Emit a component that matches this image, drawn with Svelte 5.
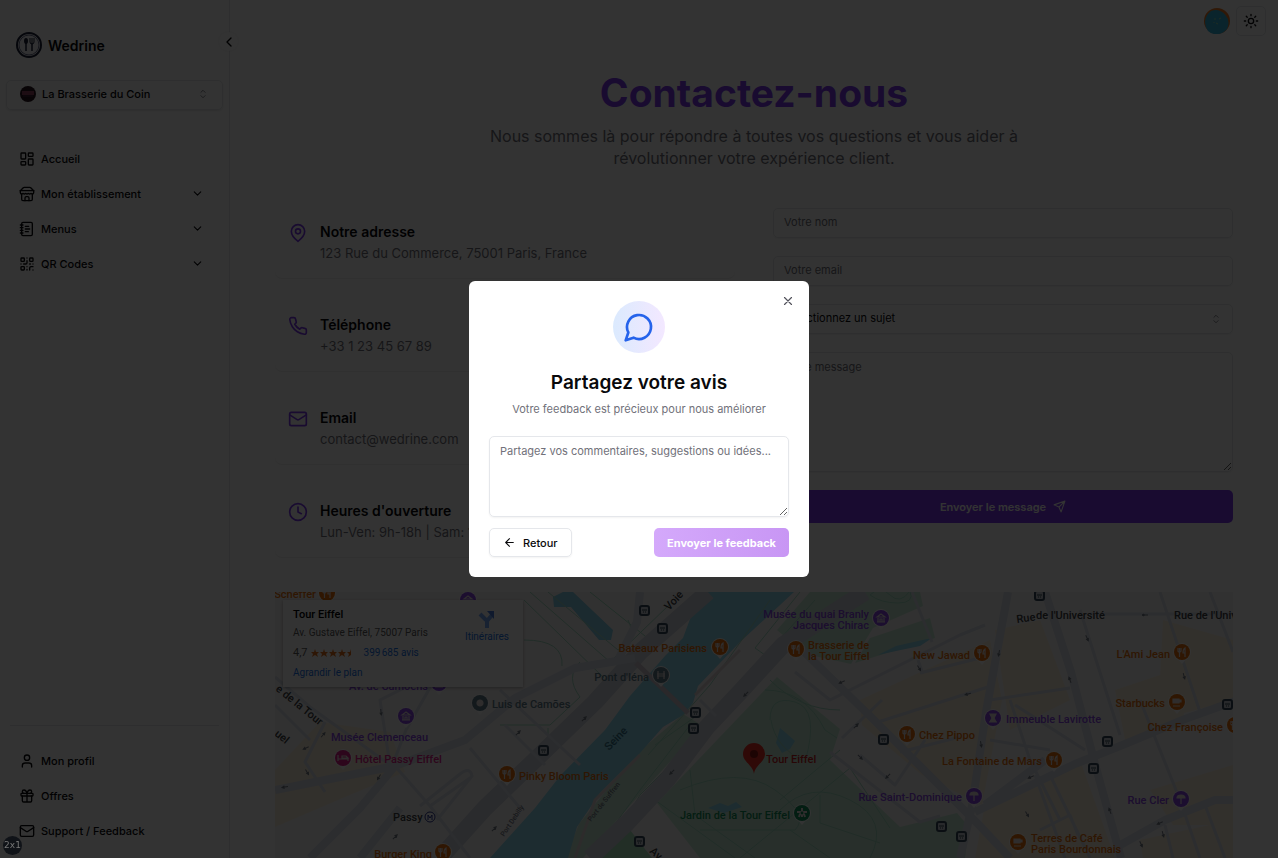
<script lang="ts">
  let feedback = $state("");
  let dialogOpen = $state(true);

  const mainLinks = [
    { label: "Accueil", icon: "dashboard", nested: false },
    { label: "Mon établissement", icon: "store", nested: true },
    { label: "Menus", icon: "notebook", nested: true },
    { label: "QR Codes", icon: "qr", nested: true },
  ];

  const footerLinks = [
    { label: "Mon profil", icon: "user" },
    { label: "Offres", icon: "gift" },
    { label: "Support / Feedback", icon: "mail" },
  ];

  const contacts = [
    { title: "Notre adresse", text: "123 Rue du Commerce, 75001 Paris, France", icon: "pin" },
    { title: "Téléphone", text: "+33 1 23 45 67 89", icon: "phone" },
    { title: "Email", text: "contact@wedrine.com", icon: "mail" },
    { title: "Heures d'ouverture", text: "Lun-Ven: 9h-18h | Sam: 10h-16h", icon: "clock" },
  ];

  const ORANGE = "#e8710a";
  const PURPLE = "#8b46e8";
  const PINK = "#e0218a";
  const SLATE = "#607d8b";
  const GREEN = "#12915a";

  // x/y is the centre of the pin, tx/ty the baseline of the first line
  const places = [
    { x: 327, y: 593, tx: 316, ty: 598, end: true, lines: ["Scheffer"], color: ORANGE, kind: "fork" },
    { x: 468, y: 600, tx: 430, ty: 604, end: true, lines: [], color: PURPLE, kind: "museum" },
    { x: 439, y: 683, tx: 428, ty: 690, end: true, lines: ["Av. de Camoëns"], color: PURPLE, kind: "museum" },
    { x: 406, y: 716, tx: 331, ty: 741, end: false, lines: ["Musée Clemenceau"], color: PURPLE, kind: "museum" },
    { x: 343, y: 758, tx: 355, ty: 763, end: false, lines: ["Hôtel Passy Eiffel"], color: PINK, kind: "bed" },
    { x: 480, y: 703, tx: 492, ty: 708, end: false, lines: ["Luis de Camões"], color: SLATE, kind: "dot" },
    { x: 507, y: 774, tx: 519, ty: 780, end: false, lines: ["Pinky Bloom Paris"], color: ORANGE, kind: "fork" },
    { x: 443, y: 852, tx: 432, ty: 858, end: true, lines: ["Burger King"], color: ORANGE, kind: "fork" },
    { x: 720, y: 647, tx: 707, ty: 652, end: true, lines: ["Bateaux Parisiens"], color: ORANGE, kind: "fork" },
    { x: 661, y: 675, tx: 649, ty: 681, end: true, lines: ["Pont d'Iéna"], color: SLATE, kind: "bridge" },
    { x: 796, y: 649, tx: 808, ty: 649, end: false, lines: ["Brasserie de", "la Tour Eiffel"], color: ORANGE, kind: "fork" },
    { x: 881, y: 618, tx: 869, ty: 618, end: true, lines: ["Musée du quai Branly", "Jacques Chirac"], color: PURPLE, kind: "museum" },
    { x: 982, y: 653, tx: 970, ty: 659, end: true, lines: ["New Jawad"], color: ORANGE, kind: "fork" },
    { x: 907, y: 734, tx: 919, ty: 739, end: false, lines: ["Chez Pippo"], color: ORANGE, kind: "fork" },
    { x: 993, y: 718, tx: 1006, ty: 723, end: false, lines: ["Immeuble Lavirotte"], color: PURPLE, kind: "tower" },
    { x: 1054, y: 760, tx: 1042, ty: 765, end: true, lines: ["La Fontaine de Mars"], color: ORANGE, kind: "fork" },
    { x: 974, y: 796, tx: 962, ty: 801, end: true, lines: ["Rue Saint-Dominique"], color: PURPLE, kind: "sign" },
    { x: 802, y: 813, tx: 790, ty: 819, end: true, lines: ["Jardin de la Tour Eiffel"], color: GREEN, kind: "flower" },
    { x: 1182, y: 652, tx: 1170, ty: 658, end: true, lines: ["L'Ami Jean"], color: ORANGE, kind: "fork" },
    { x: 1177, y: 702, tx: 1165, ty: 707, end: true, lines: ["Starbucks"], color: ORANGE, kind: "cup" },
    { x: 1235, y: 725, tx: 1223, ty: 731, end: true, lines: ["Chez Françoise"], color: ORANGE, kind: "fork" },
    { x: 1181, y: 799, tx: 1169, ty: 804, end: true, lines: ["Rue Cler"], color: PURPLE, kind: "sign" },
    { x: 1018, y: 842, tx: 1031, ty: 842, end: false, lines: ["Terres de Café", "Paris Bourdonnais"], color: ORANGE, kind: "cup" },
  ];

  const stops = [
    [644, 610], [662, 628], [543, 750], [695, 712], [693, 728], [639, 841], [883, 739], [941, 826],
    [961, 836], [1039, 595], [1107, 741], [1093, 768], [1227, 704],
  ];

  const arrows = [
    [584, 719, -45], [518, 733, -45], [518, 676, -45], [672, 772, 135], [746, 694, 135], [842, 682, 155],
    [856, 726, -45], [860, 757, 45], [888, 776, 135], [968, 694, 165], [919, 668, 60], [999, 653, 100],
    [1087, 638, 65], [1070, 680, 250], [1145, 615, 180], [1184, 676, 75], [1031, 777, 155],
    [1027, 814, 60], [1110, 811, 250], [1160, 823, 155], [1163, 834, 75], [381, 712, 85],
    [323, 735, -50], [306, 748, 155], [307, 772, 60], [379, 777, 120], [285, 787, 170], [395, 837, -45],
    [494, 829, -45], [981, 744, 80], [1141, 844, 65],
  ];
</script>

{#snippet icon(name: string, size: number)}
  <svg
    width={size}
    height={size}
    viewBox="0 0 24 24"
    fill="none"
    stroke="currentColor"
    stroke-width="2"
    stroke-linecap="round"
    stroke-linejoin="round"
    aria-hidden="true"
  >
    {#if name === "dashboard"}
      <rect x="3" y="3" width="7" height="9" rx="1" />
      <rect x="14" y="3" width="7" height="5" rx="1" />
      <rect x="14" y="12" width="7" height="9" rx="1" />
      <rect x="3" y="16" width="7" height="5" rx="1" />
    {:else if name === "store"}
      <path d="m2 7 4.4-4.4A2 2 0 0 1 7.8 2h8.4a2 2 0 0 1 1.4.6L22 7" />
      <path d="M4 12v8a2 2 0 0 0 2 2h12a2 2 0 0 0 2-2v-8" />
      <path d="M15 22v-4a2 2 0 0 0-2-2h-2a2 2 0 0 0-2 2v4M2 7h20" />
      <path
        d="M22 7v3a2 2 0 0 1-2 2 2.7 2.7 0 0 1-1.6-.6.7.7 0 0 0-.8 0A2.7 2.7 0 0 1 16 12a2.7 2.7 0 0 1-1.6-.6.7.7 0 0 0-.8 0A2.7 2.7 0 0 1 12 12a2.7 2.7 0 0 1-1.6-.6.7.7 0 0 0-.8 0A2.7 2.7 0 0 1 8 12a2.7 2.7 0 0 1-1.6-.6.7.7 0 0 0-.8 0A2.7 2.7 0 0 1 4 12a2 2 0 0 1-2-2V7"
      />
    {:else if name === "notebook"}
      <path d="M2 6h4M2 10h4M2 14h4M2 18h4" />
      <rect x="4" y="2" width="16" height="20" rx="2" />
      <path d="M9.500 8h5M9.500 12H16M9.500 16H14" />
    {:else if name === "qr"}
      <rect x="3" y="3" width="5" height="5" rx="1" />
      <rect x="16" y="3" width="5" height="5" rx="1" />
      <rect x="3" y="16" width="5" height="5" rx="1" />
      <path d="M21 16h-3a2 2 0 0 0-2 2v3M21 21v.01M12 7v3a2 2 0 0 1-2 2H7M3 12h.01M12 3h.01M12 16v.01M16 12h1M21 12v.01M12 21v-1" />
    {:else if name === "user"}
      <circle cx="12" cy="7" r="4" />
      <path d="M19 21v-2a4 4 0 0 0-4-4H9a4 4 0 0 0-4 4v2" />
    {:else if name === "gift"}
      <rect x="3" y="8" width="18" height="4" rx="1" />
      <path d="M12 8v13M19 12v7a2 2 0 0 1-2 2H7a2 2 0 0 1-2-2v-7" />
      <path d="M7.500 8a2.500 2.500 0 0 1 0-5A4.800 8 0 0 1 12 8a4.800 8 0 0 1 4.500-5 2.500 2.500 0 0 1 0 5" />
    {:else if name === "mail"}
      <rect x="2" y="4" width="20" height="16" rx="2" />
      <path d="m22 7-8.970 5.700a1.940 1.940 0 0 1-2.060 0L2 7" />
    {:else if name === "pin"}
      <path d="M20 10c0 6-8 12-8 12s-8-6-8-12a8 8 0 0 1 16 0Z" />
      <circle cx="12" cy="10" r="3" />
    {:else if name === "phone"}
      <path
        d="M22 16.920v3a2 2 0 0 1-2.180 2 19.790 19.790 0 0 1-8.630-3.070 19.500 19.500 0 0 1-6-6 19.790 19.790 0 0 1-3.070-8.670A2 2 0 0 1 4.110 2h3a2 2 0 0 1 2 1.720 12.840 12.840 0 0 0 .7 2.810 2 2 0 0 1-.45 2.110L8.090 9.910a16 16 0 0 0 6 6l1.270-1.270a2 2 0 0 1 2.110-.45 12.840 12.840 0 0 0 2.810.7A2 2 0 0 1 22 16.920z"
      />
    {:else if name === "clock"}
      <circle cx="12" cy="12" r="10" />
      <path d="M12 6v6l4 2" />
    {:else if name === "sun"}
      <circle cx="12" cy="12" r="4" />
      <path d="M12 2v2M12 20v2M4.930 4.930l1.410 1.410M17.660 17.660l1.410 1.410M2 12h2M20 12h2M6.340 17.660l-1.410 1.410M19.070 4.930l-1.410 1.410" />
    {:else if name === "send"}
      <path d="m22 2-7 20-4-9-9-4ZM22 2 11 13" />
    {:else if name === "message"}
      <path d="M7.900 20A9 9 0 1 0 4 16.100L2 22Z" />
    {:else if name === "down"}
      <path d="m6 9 6 6 6-6" />
    {:else if name === "left"}
      <path d="m15 18-6-6 6-6" />
    {:else if name === "arrow"}
      <path d="m12 19-7-7 7-7M19 12H5" />
    {:else if name === "close"}
      <path d="M18 6 6 18M6 6l12 12" />
    {:else if name === "sort"}
      <path d="m7 8 5-5 5 5M7 16l5 5 5-5" />
    {/if}
  </svg>
{/snippet}

<div class="app">
  <aside class="sidebar">
    <button class="collapse" aria-label="Réduire le menu">{@render icon("left", 16)}</button>
    <a class="brand" href="/">
      <svg width="28" height="28" viewBox="0 0 28 28" aria-hidden="true">
        <circle cx="14" cy="14" r="12" fill="#f4f4f8" stroke="#1b2138" stroke-width="2" />
        <circle cx="14" cy="14" r="10" fill="none" stroke="#6d7390" stroke-width="1" />
        <ellipse cx="11" cy="10" rx="2" ry="3" fill="#1b2138" />
        <path d="M11 12v8M17 12v8" stroke="#1b2138" stroke-width="1.500" />
        <path d="M15 7v4q0 2 2 2t2-2V7M17 7v5" fill="none" stroke="#1b2138" />
      </svg>
      Wedrine
    </a>
    <button class="venue">
      <svg width="16" height="16" viewBox="0 0 16 16" aria-hidden="true">
        <circle cx="8" cy="8" r="8" fill="#2a1420" />
        <path d="M2 6h12M2 8h12" stroke="#93415f" stroke-width="2" />
        <path d="M3 10h10" stroke="#51304c" />
      </svg>
      <span>La Brasserie du Coin</span>
      <i class="sort">{@render icon("sort", 10)}</i>
    </button>
    <nav class="links" aria-label="Navigation principale">
      {#each mainLinks as link}
        <a href="#{link.icon}">
          {@render icon(link.icon, 16)}
          <span>{link.label}</span>
          {#if link.nested}{@render icon("down", 13)}{/if}
        </a>
      {/each}
    </nav>
    <nav class="links bottom" aria-label="Compte">
      {#each footerLinks as link}
        <a href="#{link.icon}">
          {@render icon(link.icon, 16)}
          <span>{link.label}</span>
        </a>
      {/each}
    </nav>
  </aside>

  <main>
    <div class="topbar">
      <button class="avatar" aria-label="Profil">
        <svg width="26" height="26" viewBox="0 0 26 26" aria-hidden="true">
          <circle cx="13" cy="13" r="13" fill="#f07a24" />
          <path d="M7 3a13 13 0 0 1 16 18 13 13 0 0 1-19 2A14 14 0 0 1 7 3Z" fill="#35b4dc" />
          <path d="M11 10v2M15 11l2-1M12 15l2 1M10 14v1" stroke="#8fdca8" />
        </svg>
      </button>
      <button class="theme" aria-label="Changer de thème">{@render icon("sun", 16)}</button>
    </div>

    <div class="content">
      <header>
        <h1>Contactez-nous</h1>
        <p>
          Nous sommes là pour répondre à toutes vos questions et vous aider à
          révolutionner votre expérience client.
        </p>
      </header>

      <div class="columns">
        <div class="contacts">
          {#each contacts as item}
            <div class="contact">
              {@render icon(item.icon, 20)}
              <div>
                <h2>{item.title}</h2>
                <p>{item.text}</p>
              </div>
            </div>
          {/each}
        </div>

        <form>
          <input type="text" placeholder="Votre nom" aria-label="Votre nom" />
          <input type="email" placeholder="Votre email" aria-label="Votre email" />
          <div class="select">
            <select aria-label="Sujet">
              <option>Sélectionnez un sujet</option>
            </select>
            <i class="sort">{@render icon("sort", 10)}</i>
          </div>
          <textarea placeholder="Votre message" aria-label="Votre message"></textarea>
          <button type="button" class="submit">
            Envoyer le message
            {@render icon("send", 13)}
          </button>
        </form>
      </div>

      <div class="map">
        <svg class="plan" viewBox="275 592 958 266" role="img" aria-label="Plan autour de la Tour Eiffel">
          <rect x="275" y="592" width="958" height="266" fill="#f5f4f4" />
          <g fill="#faefdc">
            <path d="M275 770 320 722l70 10 15 40-60 25-70 30Z" />
            <path d="M860 700 990 640l12 60-20 105-60-30-60-50Z" />
            <path d="m995 630 45-10 30 80-60 30ZM1163 620l70 20v60l-75 20ZM1115 690l60-20 10 50-60 20Z" />
            <path d="m985 805 95-45 35 98H975ZM1150 790l83-25v60h-60ZM1140 840l93-20v38h-90Z" />
          </g>
          <g fill="#c8ecd6">
            <path d="M810 592h110l3 14-50 22-22 36-46-10-28-24Z" />
            <path d="m930 618 5 20-80 25 15-25Z" />
            <path d="m683 714 20 12-60 65-60 67h-18l14-34 55-68Z" />
            <path d="m777 677 63 52-10 31 70 67 57-14 12 14-4 31H700l-43-55Z" />
            <path d="m630 830 22 28h-52Z" fill="#a8e5bd" />
          </g>
          <g fill="#90daee">
            <path d="M700 592h94l-54 50-42 44-5 17-10 12-20 12-23 26-40 40-23 34-9 31h-78l45-50 25-32 45-46 25-34 35-40 18-18Z" />
            <path d="m553 597 10-5h10l40 38-2 10h-12l-28-33h-17Z" fill="#86cfe8" />
            <path d="m780 728 6 5 9 8-5 8-8 4-6-10ZM708 808l12-5 8 3 8-4 6 5-18 6Z" />
            <path d="m878 655 18-9 22-5 14-3-12 8-24 5Z" />
          </g>
          <g class="trail">
            <path d="M524 600l80 78M530 592l80 70 60 -58M548 592l70 58q20-10 10-30M524 640q40 0 38 26M500 725h50l30-28q-15-20 0-35M548 728v20M590 592l60 48" />
            <path d="M800 592l-45 56 20 14M815 600l-50 56M700 735l-60 60-38 63M690 725l-50 65-50 68M655 745l40-28M770 600l-60 85-62 70" />
            <path d="M765 690q40 0 60 40l12 8M770 680q30 30 70 30M770 720q0-25 25-18t10 60q-30-15-34-42M780 800l60-50M690 770l5 45 60 43M680 790q60-25 95 0t20 40H700M780 810q30-30 70-10t20 58M740 858l110-90 40 60M655 800l80 58M790 830l40 28M820 795v28l60 20" />
            <path d="M870 595q10-10 20 0t20-4q5 12-12 12t-28-8Z" />
          </g>
          <g class="roads">
            <path class="wide" d="M708 592 640 652l-45 50-60 58-50 48-45 50M865 592l-82 53-43 47-33 35-40 53-40 43-37 35" />
            <path class="mid" d="M800 648 870 716l50 50 60 60 30 32M1045 592l26 80 24 92 26 94M1008 592l-22 120-14 94-12 52" />
            <path class="mid" d="M275 790l50-10 70-14 70-26 50-42 60-30 60-10M395 766 360 808l-50 50M640 592l-3 30-20 40M360 858l40-50" />
            <path d="M390 765 380 700l40-20M390 765l-80-58-35-30M310 740l-35-35M325 722l-20 40 20 30M440 670l-34 60-14 36M395 766l35 40 40 52M430 806l40-28M420 806l40-32q10-8 12 2l-35 44M470 748l50 60M500 690l80 75M505 725l40 40" />
            <path class="mid" d="m975 812 100-48 50-20 60-25 50-18M1045 760l-60 45M1115 848l50-28 50-20h20" />
            <path d="M795 672 830 700 960 635l25-10M878 722l110-35M842 738l40-38M830 752l90 70 20-6M900 752l60-15M860 755l35 30 30-45M920 673l60-15M918 660l5 14M1080 610l40 125M1090 614h145M1160 592l40 120M1210 592l23 60M990 700l80-12M1010 700l20 60 30 60M1015 705l70 45M1140 700l40 100 20 58M1035 775l30 83M1050 775l40 83M1165 825l8 33M1205 805l20 53M1040 830l30-15 8 20M912 592l20 50M990 740l60 10M700 700l16 16" />
            <path d="m636 663 52 50" stroke="#cfc6cf" stroke-width="5" />
            <path d="M740 650l-45 45M640 755l-45 45-20 58" stroke="#ded5d8" />
          </g>
          {#each arrows as [x, y, angle]}
            <path d="M-3 0H2M1-1L3 0 1 1Z" fill="#757c88" stroke="#757c88" transform="translate({x} {y}) rotate({angle})" />
          {/each}
          {#each stops as [x, y]}
            <g transform="translate({x} {y})">
              <rect x="-4" y="-4" width="9" height="9" rx="2" fill="#c9ced6" stroke="#33485a" stroke-width="2" />
              <path d="M-2 0H3M-1 2h1M1 2h1" stroke="#33485a" />
            </g>
          {/each}

          <g class="streets">
            <text transform="translate(669 611) rotate(-47)">Voie G</text>
            <text transform="translate(275 690) rotate(39)">e de la Tour</text>
            <text transform="translate(274 735) rotate(39)">uel</text>
            <text transform="translate(1017 623) rotate(-8)">Rue</text>
            <text x="1036" y="619">de l'Université</text>
            <text x="1174" y="619">Rue de l'Univ</text>
            <text transform="translate(649 852) rotate(42)">Av</text>
            <text x="393" y="821">Passy</text>
            <text class="water" transform="translate(609 751) rotate(-46)">Seine</text>
            <text class="tiny" transform="translate(591 822) rotate(-52)">Port de Suffren</text>
            <text class="tiny" transform="translate(504 837) rotate(-56)">Port Debilly</text>
          </g>
          <circle cx="430" cy="817" r="5" fill="#fff" stroke="#26328c" />
          <path d="M428 820v-5l2 3 2-3v5" fill="none" stroke="#26328c" />

          {#each places as place}
            <g transform="translate({place.x} {place.y})">
              <path d="M-5 6 0 12 5 6Z" fill="#fff" />
              <circle r="9" fill="#fff" />
              <circle r="8" fill={place.color} />
              <g fill="none" stroke="#e9e2e2" stroke-width="1.200">
                {#if place.kind === "fork"}
                  <path d="M-4-4v3q0 1 1.500 1T-1-1V-4M-2.500-4V5M3 5V-4Q1-3 1 1h2" />
                {:else if place.kind === "museum"}
                  <path d="M-4-1 0-4 4-1ZM-3 0v4M3 0v4M-4 4h8M-1 4V1h2v3" />
                {:else if place.kind === "bed"}
                  <path d="M-5-3v6M-5 1H5v2M-1 0v-2h4l2 2Z" />
                {:else if place.kind === "cup"}
                  <path d="M-4-3h6v4h-6ZM2-2h2v2H2M-4 4h7" fill="#e9e2e2" />
                {:else if place.kind === "tower"}
                  <path d="M-3-4h6L1 0l2 4h-6l2-4ZM-4 4h8" fill="#e9e2e2" />
                {:else if place.kind === "sign"}
                  <path d="M-4-1Q-4-4 0-4t4 3ZM0-4v9" fill="#e9e2e2" />
                {:else if place.kind === "bridge"}
                  <path d="M-3-4v8M3-4v8M-4-1h8M-4 1h8" />
                {:else if place.kind === "flower"}
                  <path d="M0-5v3M0 2v2M-5-1h3M2-1h3M-3 4l1-3M3 4 2 1" stroke-width="2" />
                  <circle r="2" />
                {:else}
                  <circle r="3" fill="#e9e2e2" />
                {/if}
              </g>
            </g>
            <text class="place" x={place.tx} y={place.ty} fill={place.color} text-anchor={place.end ? "end" : "start"}>
              {#each place.lines as line, i}
                <tspan x={place.tx} dy={i * 11}>{line}</tspan>
              {/each}
            </text>
          {/each}

          <path d="M754 774c-1-9-11-12-11-20a11 11 0 0 1 22 0c0 8-10 11-11 20Z" fill="#ea2f25" />
          <circle cx="754" cy="754" r="4" fill="#8e1712" />
          <text class="place" x="766" y="763" fill="#c5221f">Tour Eiffel</text>
        </svg>

        <div class="info">
          <div class="info-text">
            <strong>Tour Eiffel</strong>
            <span>Av. Gustave Eiffel, 75007 Paris</span>
            <div class="rating">
              4,7
              <svg width="44" height="9" viewBox="0 0 44 9" aria-hidden="true">
                {#each [0, 1, 2, 3, 4] as n}
                  <path
                    d={n < 4 ? "M4 0 5 3h3L6 5l1 3-3-2-3 2 1-3L0 3h3Z" : "M4 0v6L1 8l1-3L0 3h3Z"}
                    transform="translate({n * 9} 0)"
                    fill="#e7711b"
                  />
                {/each}
              </svg>
              <a href="#avis">399&#8239;685 avis</a>
            </div>
            <a href="#plan">Agrandir le plan</a>
          </div>
          <a class="route" href="#itineraire">
            <svg width="18" height="18" viewBox="0 0 18 18" aria-hidden="true">
              <path d="m2 4 6 6M9 18v-7l5-6" fill="none" stroke="#7baaf7" stroke-width="4" />
              <path d="M9 1h7v8Z" fill="#4a7de0" />
            </svg>
            Itinéraires
          </a>
        </div>
      </div>
    </div>
  </main>
</div>

{#if dialogOpen}
  <div class="overlay">
    <div class="dialog" role="dialog" aria-modal="true" aria-labelledby="feedback-title">
      <button class="close" aria-label="Fermer" onclick={() => (dialogOpen = false)}>
        {@render icon("close", 14)}
      </button>
      <div class="bubble">{@render icon("message", 32)}</div>
      <h2 id="feedback-title">Partagez votre avis</h2>
      <p>Votre feedback est précieux pour nous améliorer</p>
      <textarea
        bind:value={feedback}
        placeholder="Partagez vos commentaires, suggestions ou idées..."
        aria-label="Votre avis"
      ></textarea>
      <div class="actions">
        <button class="back" onclick={() => (dialogOpen = false)}>
          {@render icon("arrow", 13)}
          Retour
        </button>
        <button class="send" disabled={!feedback}>Envoyer le feedback</button>
      </div>
    </div>
  </div>
{/if}
<div class="badge">2x1</div>

<style>
  :global(body) {
    overflow: hidden;
    background: #fff;
    color: #09090b;
    font-family: Inter, "Liberation Sans", sans-serif;
    font-size: 11px;
  }
  h1,
  h2,
  p {
    margin: 0;
  }
  a {
    color: inherit;
    text-decoration: none;
  }
  button,
  input,
  select,
  textarea {
    box-sizing: border-box;
    font: inherit;
    color: inherit;
  }
  button {
    display: flex;
    align-items: center;
    justify-content: center;
    padding: 0;
    border: 0;
    background: none;
    cursor: pointer;
  }
  svg {
    display: block;
    flex-shrink: 0;
  }

  .app {
    display: grid;
    grid-template-columns: 230px 1fr;
    height: 100vh;
  }

  /* sidebar */
  .sidebar {
    position: relative;
    display: flex;
    flex-direction: column;
    box-sizing: border-box;
    height: 100vh;
    padding: 30px 6px 10px;
    border-right: 1px solid #e5e7eb;
  }
  .collapse {
    position: absolute;
    top: 32px;
    right: -9px;
    width: 19px;
    height: 19px;
    border-radius: 50%;
    background: #fff;
    box-shadow: 0 0 3px rgba(0, 0, 0, 0.1);
  }
  .brand {
    display: flex;
    align-items: center;
    gap: 5px;
    padding: 1px 9px;
    font-size: 14px;
    font-weight: 600;
  }
  .venue {
    gap: 6px;
    height: 30px;
    margin-top: 20px;
    padding: 0 14px 2px 13px;
    border: 1px solid #e5e7eb;
    border-radius: 5px;
    box-shadow: 0 1px 2px rgba(0, 0, 0, 0.1);
    font-weight: 500;
  }
  .venue span,
  .links span {
    flex: 1;
    text-align: left;
  }
  .sort {
    display: flex;
    color: #71717a;
  }
  .links {
    display: flex;
    flex-direction: column;
    padding-top: 31px;
  }
  .links a {
    display: flex;
    align-items: center;
    gap: 6px;
    height: 35px;
    padding: 0 19px 0 13px;
    font-weight: 500;
  }
  .bottom {
    margin: auto 4px 0;
    padding-top: 17px;
    border-top: 1px solid #e5e7eb;
  }
  .bottom a {
    padding-left: 9px;
  }

  /* contact page */
  main {
    min-width: 0;
    overflow: hidden;
  }
  .topbar {
    display: flex;
    align-items: center;
    justify-content: flex-end;
    gap: 6px;
    padding: 6px 12px 0;
  }
  .theme {
    width: 30px;
    height: 30px;
    border: 1px solid #e5e7eb;
    border-radius: 5px;
    box-sizing: border-box;
  }
  .content {
    padding: 32px 45px 0;
  }
  header {
    text-align: center;
  }
  h1 {
    color: #7c3aed;
    font-size: 39px;
    font-weight: 700;
    line-height: 50px;
  }
  header p {
    max-width: 605px;
    margin: 7px auto 0;
    color: #71717a;
    font-size: 16px;
    line-height: 22px;
  }
  .columns {
    display: grid;
    grid-template-columns: 1fr 1fr;
    gap: 38px;
    align-items: start;
    margin-top: 39px;
  }
  .contacts {
    display: grid;
    gap: 23px;
  }
  .contact {
    display: flex;
    align-items: flex-start;
    gap: 12px;
    box-sizing: border-box;
    height: 70px;
    padding: 15px 13px 0;
    border-radius: 7px;
    box-shadow: 0 1px 1px rgba(0, 0, 0, 0.08);
    color: #7c3aed;
  }
  .contact h2 {
    color: #09090b;
    font-size: 14px;
    font-weight: 600;
    line-height: 18px;
  }
  .contact p {
    margin-top: 2px;
    color: #71717a;
    font-size: 13px;
    line-height: 20px;
  }
  form {
    display: grid;
    gap: 18px;
  }
  input,
  select,
  textarea {
    display: block;
    width: 100%;
    padding: 0 10px 2px;
    border: 1px solid #e5e7eb;
    border-radius: 5px;
    outline: 0;
    background: transparent;
    box-shadow: 0 1px 2px rgba(0, 0, 0, 0.05);
  }
  input,
  select {
    height: 30px;
  }
  select {
    appearance: none;
  }
  textarea {
    height: 120px;
    padding: 7px 10px;
    resize: vertical;
  }
  ::placeholder {
    color: #71717a;
    opacity: 1;
  }
  .select {
    position: relative;
  }
  .select .sort {
    position: absolute;
    top: 10px;
    right: 12px;
  }
  .submit {
    gap: 7px;
    height: 33px;
    border-radius: 5px;
    background: #7c3aed;
    color: #fff;
    font-weight: 600;
  }

  /* map */
  .map {
    position: relative;
    margin-top: 35px;
  }
  .plan {
    width: 100%;
    height: auto;
  }
  .trail {
    fill: none;
    stroke: #a3dcc4;
    stroke-width: 1;
  }
  .roads {
    fill: none;
    stroke: #d9dfe9;
    stroke-width: 3;
    stroke-linejoin: round;
  }
  .wide {
    stroke: #d0d4de;
    stroke-width: 17;
  }
  .mid {
    stroke-width: 8;
  }
  .place,
  .streets {
    font-family: Roboto, sans-serif;
    font-size: 11px;
    font-weight: 500;
  }
  .streets {
    fill: #3c4043;
  }
  .streets .water {
    fill: #35758a;
  }
  .streets .tiny {
    fill: #757c88;
    font-size: 7px;
  }
  .info {
    position: absolute;
    top: 8px;
    left: 8px;
    display: flex;
    justify-content: space-between;
    box-sizing: border-box;
    width: 240px;
    height: 87px;
    padding: 8px 14px 8px 10px;
    background: #fff;
    box-shadow: 0 1px 3px rgba(0, 0, 0, 0.3);
    color: #5b5b5b;
    font-family: Roboto, sans-serif;
    font-size: 10px;
  }
  .info a {
    color: #1a73e8;
  }
  .info-text {
    display: flex;
    flex-direction: column;
    line-height: 14px;
  }
  .info-text strong {
    color: #000;
    font-size: 11px;
    font-weight: 500;
  }
  .info-text span {
    margin: 4px 0 6px;
  }
  .rating {
    display: flex;
    align-items: center;
    gap: 3px;
    margin-bottom: 6px;
    font-size: 11px;
  }
  .rating a {
    margin-left: 6px;
    font-size: 10px;
  }
  .info .route {
    display: flex;
    flex-direction: column;
    align-items: center;
    gap: 3px;
    padding-top: 2px;
  }

  /* feedback dialog */
  .overlay {
    position: fixed;
    inset: 0;
    display: flex;
    align-items: center;
    justify-content: center;
    background: rgba(0, 0, 0, 0.8);
  }
  .dialog {
    position: relative;
    display: flex;
    flex-direction: column;
    align-items: center;
    box-sizing: border-box;
    width: 340px;
    padding: 20px;
    border-radius: 6px;
    background: #fff;
  }
  .close {
    position: absolute;
    top: 12px;
    right: 13px;
    width: 16px;
    height: 16px;
    color: #52525b;
  }
  .bubble {
    display: flex;
    align-items: center;
    justify-content: center;
    width: 52px;
    height: 52px;
    border-radius: 50%;
    background: linear-gradient(to right, #dbeafe, #f3e8ff);
    color: #2563eb;
  }
  .dialog h2 {
    margin-top: 16px;
    font-size: 19px;
    font-weight: 600;
    line-height: 28px;
  }
  .dialog p {
    margin-top: 3px;
    color: #71717a;
    line-height: 18px;
  }
  .dialog textarea {
    height: 81px;
    margin-top: 18px;
  }
  .actions {
    display: flex;
    justify-content: space-between;
    width: 100%;
    margin-top: 11px;
  }
  .actions button {
    height: 29px;
    padding: 0 13px;
    border-radius: 5px;
  }
  .actions .back {
    gap: 7px;
    border: 1px solid #e5e7eb;
    box-shadow: 0 1px 2px rgba(0, 0, 0, 0.05);
    font-weight: 500;
  }
  .send {
    background: linear-gradient(to right, #d4a9fb, #c896f4);
    color: #fff;
    font-weight: 700;
  }

  .badge {
    position: fixed;
    bottom: 3px;
    left: 3px;
    width: 19px;
    height: 19px;
    border-radius: 50%;
    background: #101318;
    color: #777;
    font-family: "DejaVu Sans", sans-serif;
    font-size: 9px;
    line-height: 19px;
    text-align: center;
  }
</style>
